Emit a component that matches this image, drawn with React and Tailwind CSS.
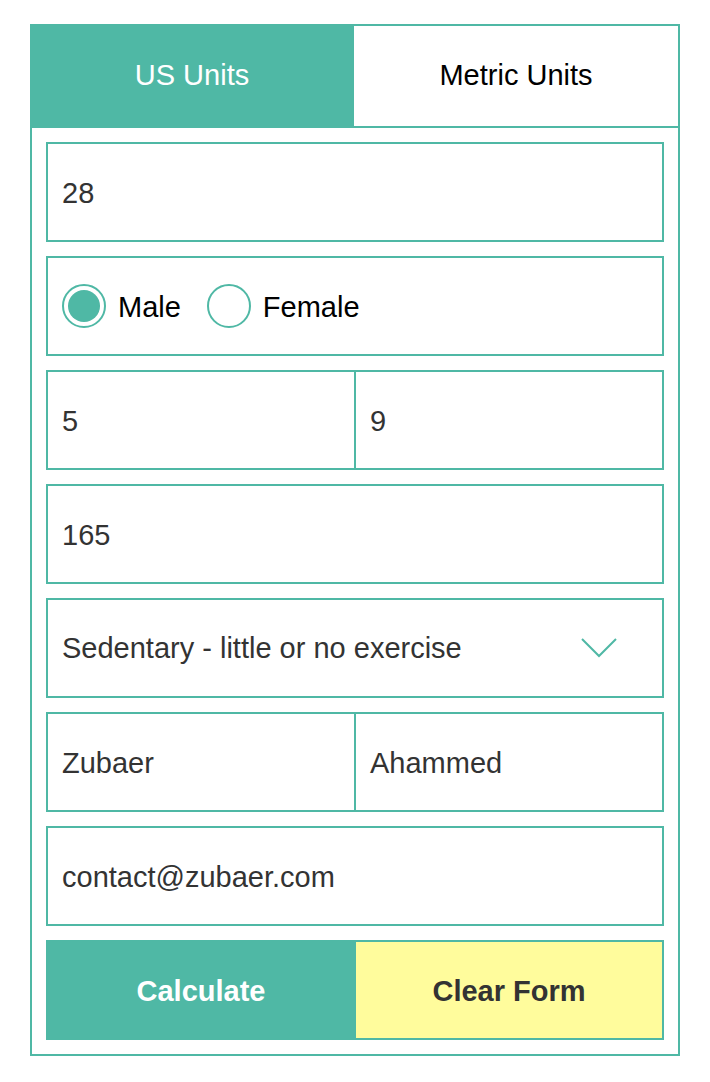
import { useState } from 'react';

const teal = 'border-[#4fb8a5]';

function Field({ value, className = '' }) {
  return (
    <div className={`flex h-[100px] items-center border-2 ${teal} px-[14px] pt-[4px] text-[29px] text-[#333] ${className}`}>
      {value}
    </div>
  );
}

function Radio({ label, checked, onClick }) {
  return (
    <button onClick={onClick} className="flex items-center gap-[12px]">
      <span className="flex h-[44px] w-[44px] items-center justify-center rounded-full border-2 border-[#4fb8a5]">
        {checked && <span className="h-[32px] w-[32px] rounded-full bg-[#4fb8a5]" />}
      </span>
      <span className="pt-[3px] text-[29px] text-black">{label}</span>
    </button>
  );
}

export default function App() {
  const [units, setUnits] = useState('us');
  const [gender, setGender] = useState('male');

  return (
    <div className="bg-white pb-[26px] pt-[24px] font-['Liberation_Sans',Arial,sans-serif]">
      <div className={`ml-[30px] w-[650px] border-2 ${teal}`}>
        {/* tabs */}
        <div className={`flex h-[102px] border-b-2 ${teal}`}>
          <button
            onClick={() => setUnits('us')}
            className={`w-[320px] text-[29px] ${units === 'us' ? 'bg-[#4fb8a5] text-white' : 'bg-white text-black'}`}
          >
            US Units
          </button>
          <button
            onClick={() => setUnits('metric')}
            className={`flex-1 border-l-2 ${teal} text-[29px] ${units === 'metric' ? 'bg-[#4fb8a5] text-white' : 'bg-white text-black'}`}
          >
            Metric Units
          </button>
        </div>

        <div className="flex flex-col gap-[14px] p-[14px]">
          <Field value="28" />

          <div className={`flex h-[100px] items-center gap-[26px] border-2 ${teal} px-[14px]`}>
            <Radio label="Male" checked={gender === 'male'} onClick={() => setGender('male')} />
            <Radio label="Female" checked={gender === 'female'} onClick={() => setGender('female')} />
          </div>

          <div className="flex">
            <Field value="5" className="w-[310px]" />
            <Field value="9" className="flex-1 border-l-0" />
          </div>

          <Field value="165" />

          <div className={`flex h-[100px] items-center justify-between border-2 ${teal} pl-[14px] pr-[45px] text-[29px] text-[#333]`}>
            <span className="pt-[2px]">Sedentary - little or no exercise</span>
            <svg width="36" height="22" viewBox="0 0 36 22" fill="none">
              <path d="M1 2 L18 19 L35 2" stroke="#4fb8a5" strokeWidth="2" />
            </svg>
          </div>

          <div className="flex">
            <Field value="Zubaer" className="w-[310px]" />
            <Field value="Ahammed" className="flex-1 border-l-0" />
          </div>

          <Field value="contact@zubaer.com" />

          <div className="flex h-[100px]">
            <button className="w-[310px] bg-[#4fb8a5] pt-[3px] text-[29px] font-bold text-white">
              Calculate
            </button>
            <button className={`flex-1 border-2 border-l-0 ${teal} bg-[#fffc9c] pt-[3px] text-[29px] font-bold text-[#333]`}>
              Clear Form
            </button>
          </div>
        </div>
      </div>
    </div>
  );
}
